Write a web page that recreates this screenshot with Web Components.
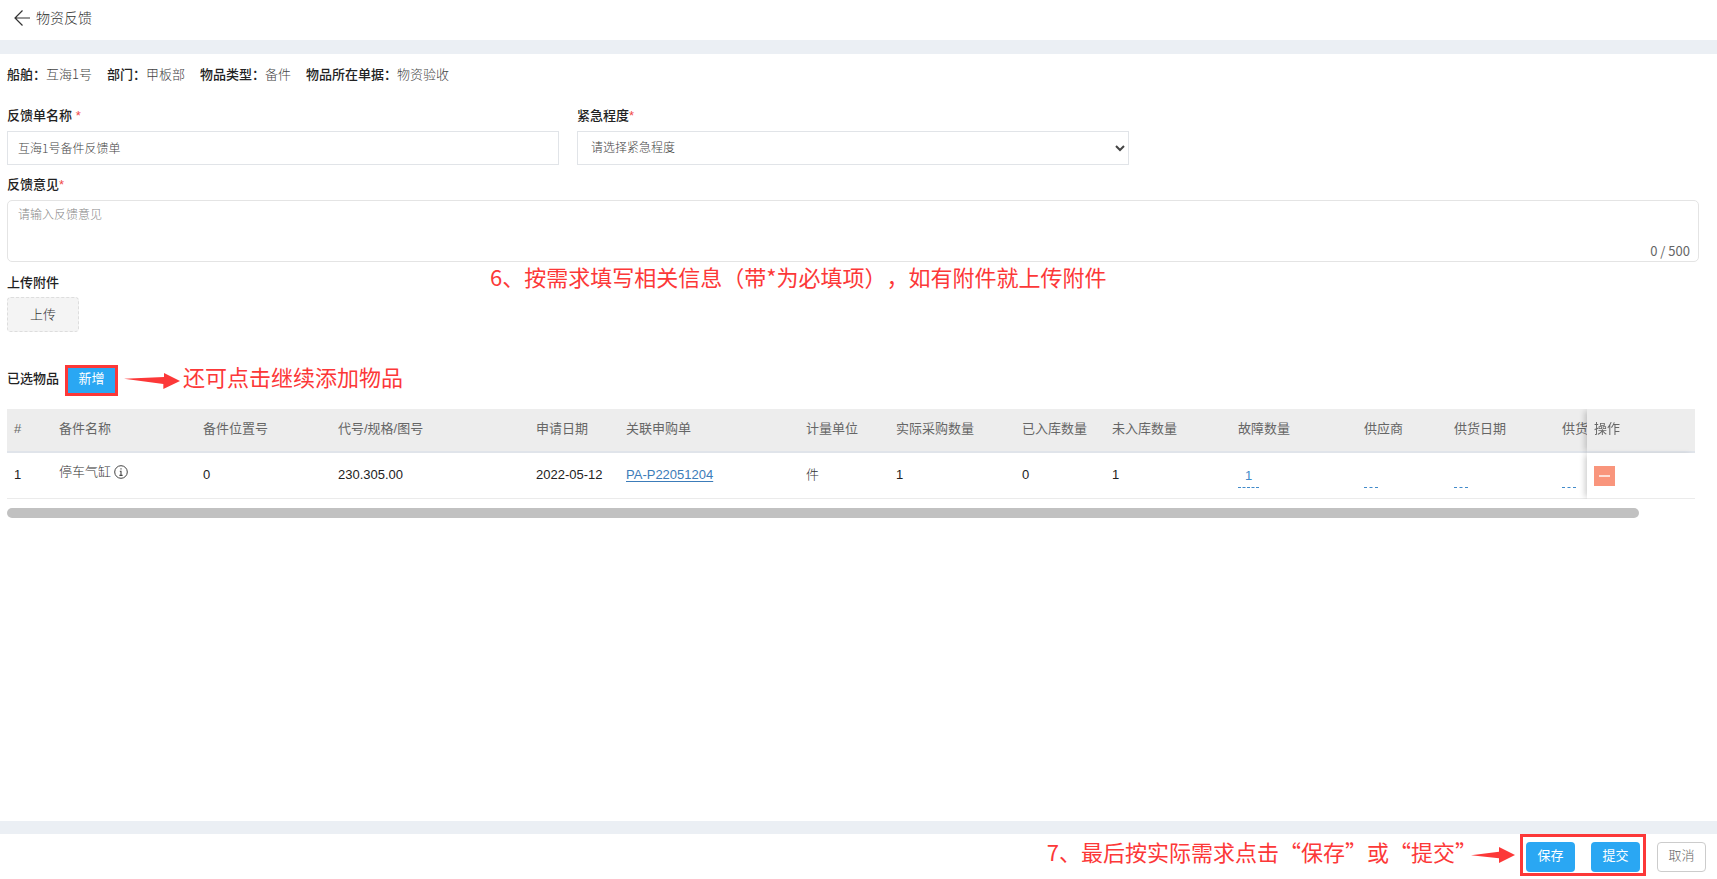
<!DOCTYPE html>
<html lang="zh-CN">
<head>
<meta charset="utf-8">
<title>物资反馈</title>
<style>
body{margin:0;background:#fff;color:#222;font-family:"Liberation Sans","Noto Sans CJK SC",sans-serif;font-size:13px;line-height:20px}
</style>
</head>
<body>
<feedback-page></feedback-page>
<script>
const define=(name,css,html,setup)=>{
  const t=document.createElement('template');
  t.innerHTML=`<style>*{box-sizing:border-box}${css}</style>${html}`;
  customElements.define(name,class extends HTMLElement{
    constructor(){
      super();
      this.attachShadow({mode:'open'}).append(t.content.cloneNode(true));
    }
    connectedCallback(){ if(setup) setup(this,this.shadowRoot); }
  });
};

define('page-header',`
:host{display:block;border-bottom:14px solid #ebeff4}
header{display:flex;align-items:center;height:40px;padding:0 14px 4px;gap:6px}
a{display:flex;color:#333}
h1{margin:0;font-size:14px;font-weight:300;color:#333;line-height:36px}`,
`<header><a href="#back" aria-label="返回"><svg width="16" height="16" viewBox="0 0 16 16" fill="none" stroke="currentColor" stroke-width="1.2"><path d="M16 8H1M8.5.5 1 8l7.5 7.5"/></svg></a><h1><slot></slot></h1></header>`);

define('info-item',`
:host{display:block;white-space:nowrap;color:#444;font-weight:300;font-family:"Noto Sans CJK SC",sans-serif}
b{color:#222;font-weight:500}`,
`<b></b><slot></slot>`,
(el,r)=>{r.querySelector('b').textContent=el.getAttribute('label')+'：'});

const labelCss=`label{display:block;font-weight:500;color:#222;line-height:20px;margin-bottom:5px}
i{color:#f04a4a;font-style:normal;font-weight:400}`;

define('text-field',`
:host{display:block}${labelCss}
input{display:block;width:100%;height:34px;border:1px solid #e1e4e8;padding:0 10px 2px;font:300 12px "Noto Sans CJK SC",sans-serif;color:#444;background:#fff;outline:0}`,
`<label for="c"><slot></slot> <i>*</i></label><input id="c">`,
(el,r)=>{r.querySelector('input').value=el.getAttribute('value')});

define('select-field',`
:host{display:block}${labelCss}
select{display:block;width:100%;height:34px;border:1px solid #e1e4e8;border-radius:0;padding:0 0 0 9px;font:300 12px "Liberation Sans","Noto Sans CJK SC",sans-serif;color:#444;background:#fff;outline:0}`,
`<label for="c"><slot></slot><i>*</i></label><select id="c"><option></option></select>`,
(el,r)=>{r.querySelector('option').textContent=el.getAttribute('placeholder')});

define('comment-field',`
:host{display:block}${labelCss}
.box{display:flex;flex-direction:column;height:62px;border:1px solid #e4e4e4;border-radius:5px}
textarea{flex:1;min-height:0;border:0;outline:0;resize:none;background:none;padding:5px 10px;font:300 12px/18px "Liberation Sans","Noto Sans CJK SC",sans-serif}
textarea::placeholder{color:#888}
span{align-self:flex-end;padding-right:8px;color:#666;line-height:20px;font-family:"Noto Sans CJK SC",sans-serif}`,
`<label for="c"><slot></slot><i>*</i></label><div class="box"><textarea id="c"></textarea><span>0 / 500</span></div>`,
(el,r)=>{r.querySelector('textarea').placeholder=el.getAttribute('placeholder')});

define('ui-button',`
:host{display:block}
button{display:block;font:400 13px/20px "Liberation Sans","Noto Sans CJK SC",sans-serif;width:49px;height:30px;padding:0 0 3px;border:0;border-radius:4px;background:#2aa7f3;color:#fff;white-space:nowrap}
:host([kind=plain]) button{background:#fff;border:1px solid #ccc;color:#666;font-weight:300}
:host([kind=small]) button{width:47px;height:25px;border-radius:0}
:host([kind=upload]) button{width:72px;height:35px;padding:0;background:#f4f4f4;border:1px dashed #ddd;color:#333;font-weight:300}`,
`<button type="button"><slot></slot></button>`);

define('mark-frame',`
:host{display:flex;border:3px solid #fc3838;padding:var(--frame-pad,0);gap:var(--frame-gap,0)}`,
`<slot></slot>`);

define('mark-note',`
:host{display:block;color:#fc3838;font:400 22px/32px "Noto Sans CJK SC",sans-serif;text-spacing-trim:space-all;white-space:nowrap}`,
`<slot></slot>`);

define('mark-arrow',`
:host{display:block;flex:none;width:56px;height:16px;color:#fc3838}
:host([short]){width:44px}
svg{display:block;width:100%;height:100%}
.short,:host([short]) .long{display:none}
:host([short]) .short{display:block}`,
`<svg class="long" viewBox="0 0 168 48" fill="currentColor"><path d="M0 17 120 12V0L168 24 118 48V33Z"/></svg><svg class="short" viewBox="0 0 132 48" fill="currentColor"><path d="M0 25 84 14V0L132 24 84 48V34Z"/></svg>`);

define('items-table',`
:host{display:block;padding-right:4px}
.scroll{overflow-x:auto;scrollbar-width:none}
table{width:100%;min-width:1746px;table-layout:fixed;border-collapse:separate;border-spacing:0}
th,td{padding:0 7px;text-align:left;white-space:nowrap;font-size:13px}
th{height:44px;padding-bottom:2px;background:#ededed;border-bottom:2px solid #e0e4ea;font-weight:400;color:#666}
td{height:46px;padding-bottom:2px;border-bottom:1px solid #ebebeb;color:#222;background:#fff}
.soft{color:#333;font-weight:300}
.name{display:flex;align-items:center;gap:3px;padding-bottom:5px}
a{color:#3c7cb9;text-decoration:underline;text-underline-offset:2px}
.pin{position:sticky;right:0;box-shadow:-4px 0 6px -2px rgba(0,0,0,.2)}
.edit{display:block;width:21px;height:23px;margin-top:4px;padding:0;border:0;border-bottom:1px dashed #428bca;background:none;color:#428bca;font:13px/20px "Liberation Sans",sans-serif;text-align:center}
.edit.empty{width:14px}
.del{display:flex;align-items:center;justify-content:center;width:21px;height:20px;margin-top:3px;padding:0;border:0;background:#f9957c}
.track{margin-top:9px}
.thumb{width:96.7%;height:10px;border-radius:5px;background:#c1c1c1}`,
`<div class="scroll"><table>
<colgroup><col style="width:45px"><col style="width:144px"><col style="width:135px"><col style="width:198px"><col style="width:90px"><col style="width:180px"><col style="width:90px"><col style="width:126px"><col style="width:90px"><col style="width:126px"><col style="width:126px"><col style="width:90px"><col style="width:108px"><col style="width:90px"><col style="width:108px"></colgroup>
<thead><tr><th>#</th><th>备件名称</th><th>备件位置号</th><th>代号/规格/图号</th><th>申请日期</th><th>关联申购单</th><th>计量单位</th><th>实际采购数量</th><th>已入库数量</th><th>未入库数量</th><th>故障数量</th><th>供应商</th><th>供货日期</th><th>供货</th><th class="pin">操作</th></tr></thead>
<tbody><tr><td>1</td><td class="soft"><div class="name">停车气缸<svg width="14" height="14" viewBox="0 0 14 14" fill="none" stroke="#444"><circle cx="7" cy="7" r="6.3" stroke-width="1"/><path d="M7 3.2v1.4M5.8 6.3H7v4M5.4 10.4h3.2" stroke-width="1.1"/></svg></div></td><td>0</td><td>230.305.00</td><td>2022-05-12</td><td><a href="#PA-P22051204">PA-P22051204</a></td><td class="soft">件</td><td>1</td><td>0</td><td>1</td><td><button class="edit">1</button></td><td><button class="edit empty" aria-label="供应商"></button></td><td><button class="edit empty" aria-label="供货日期"></button></td><td><button class="edit empty" aria-label="供货"></button></td><td class="pin"><button class="del" aria-label="删除"><svg width="11" height="2"><path d="M0 1h11" stroke="#fff" stroke-width="1.4"/></svg></button></td></tr></tbody>
</table></div><div class="track"><div class="thumb"></div></div>`);

define('feedback-page',`
:host{display:flex;flex-direction:column;min-height:100vh}
main{flex:1;padding:10px 18px 0 7px}
.info{display:flex;gap:15px;line-height:20px;margin-bottom:22px}
.fields{display:grid;grid-template-columns:repeat(3,1fr);gap:18px;margin-bottom:10px}
.upload{position:relative;margin-top:11px}
.upload h2{margin:0 0 4px}
h2{font-size:13px;line-height:20px;font-weight:500;margin:0}
.upload mark-note{position:absolute;left:483px;top:-13px}
.selected{display:flex;align-items:center;margin:30px 0 13px;height:34px}
.selected mark-frame{margin:2px 6px 0}
.selected mark-arrow{margin:4px 3px 0 0}
.selected mark-note{padding-bottom:6px}
footer{display:flex;align-items:flex-start;justify-content:flex-end;height:58px;border-top:13px solid #ebeff4;padding-right:11px}
footer mark-note{margin-top:1px}
footer mark-arrow{margin:13px 5px 0 -6px}
footer mark-frame{--frame-pad:5px 3px 1px;--frame-gap:16px;margin-right:11px}
footer>ui-button{margin-top:8px}`,
`<page-header>物资反馈</page-header>
<main>
<div class="info"><info-item label="船舶">互海1号</info-item><info-item label="部门">甲板部</info-item><info-item label="物品类型">备件</info-item><info-item label="物品所在单据">物资验收</info-item></div>
<div class="fields"><text-field value="互海1号备件反馈单">反馈单名称</text-field><select-field placeholder="请选择紧急程度">紧急程度</select-field></div>
<comment-field placeholder="请输入反馈意见">反馈意见</comment-field>
<section class="upload"><h2>上传附件</h2><ui-button kind="upload">上传</ui-button><mark-note>6、按需求填写相关信息（带*为必填项），如有附件就上传附件</mark-note></section>
<section class="selected"><h2>已选物品</h2><mark-frame><ui-button kind="small">新增</ui-button></mark-frame><mark-arrow></mark-arrow><mark-note>还可点击继续添加物品</mark-note></section>
<items-table></items-table>
</main>
<footer><mark-note>7、最后按实际需求点击“保存”或“提交”</mark-note><mark-arrow short></mark-arrow><mark-frame><ui-button>保存</ui-button><ui-button>提交</ui-button></mark-frame><ui-button kind="plain">取消</ui-button></footer>`);
</script>
</body>
</html>
